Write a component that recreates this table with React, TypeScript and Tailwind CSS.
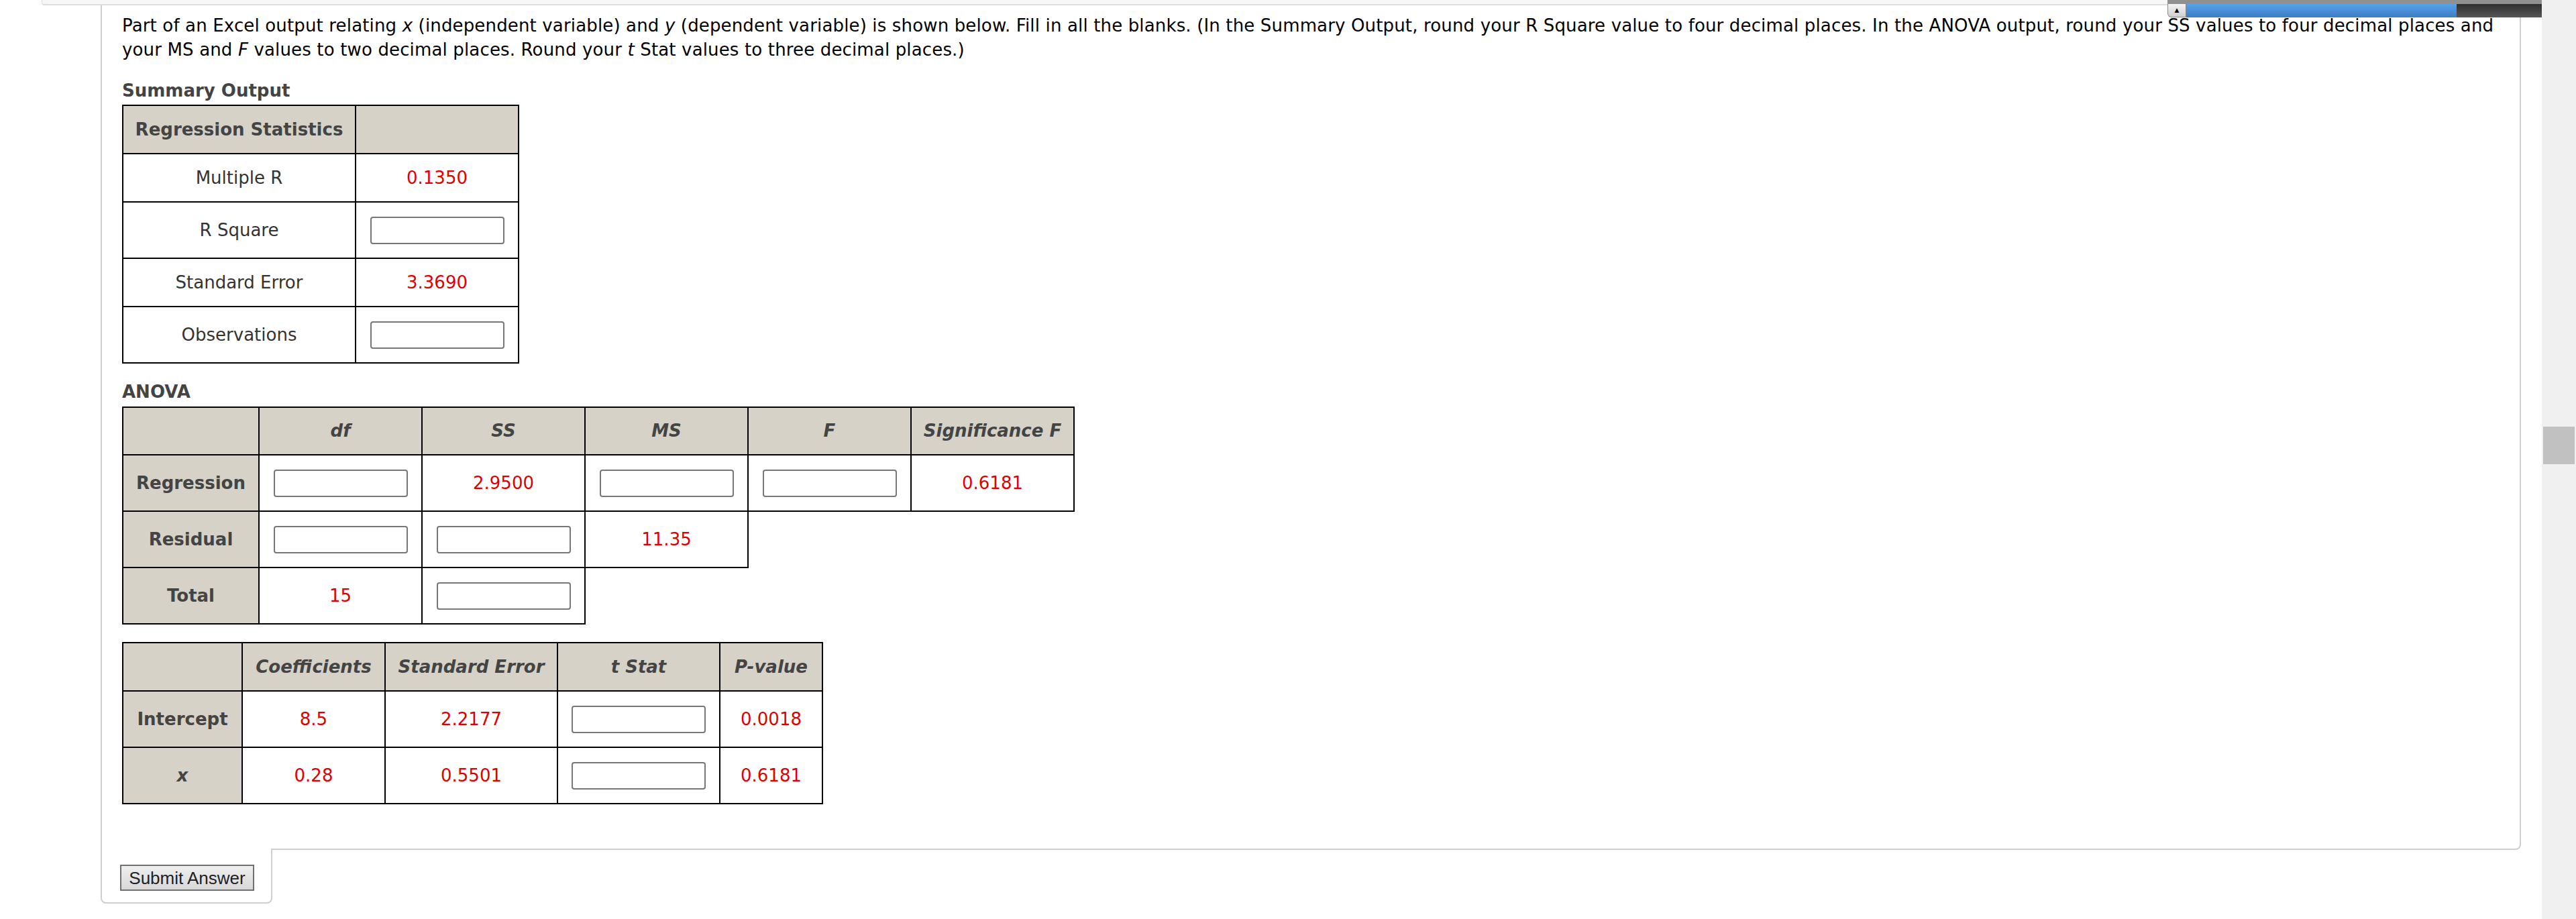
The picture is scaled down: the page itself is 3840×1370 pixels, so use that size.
import React from "react";

const cell = "border-2 border-black p-0 text-center align-middle";
const head = "border-2 border-black bg-[#d6d2c8] p-0 text-center align-middle font-bold text-[#444]";
const red = "text-[#df0000]";

function Field({ label }: { label: string }) {
  return (
    <input
      type="text"
      aria-label={label}
      className="mx-auto block h-[41px] w-[200px] rounded-[4px] border-2 border-[#777] bg-white"
    />
  );
}

function SummaryTable() {
  return (
    <table className="mt-[3px] border-collapse">
      <tbody>
        <tr>
          <th className={`${head} h-[72px] w-[347px]`}>Regression Statistics</th>
          <th className={`${head} w-[243px]`} />
        </tr>
        <tr>
          <td className={`${cell} h-[72px] text-[#333]`}>Multiple R</td>
          <td className={`${cell} ${red}`}>0.1350</td>
        </tr>
        <tr>
          <td className={`${cell} h-[84px] text-[#333]`}>R Square</td>
          <td className={cell}>
            <Field label="R Square" />
          </td>
        </tr>
        <tr>
          <td className={`${cell} h-[72px] text-[#333]`}>Standard Error</td>
          <td className={`${cell} ${red}`}>3.3690</td>
        </tr>
        <tr>
          <td className={`${cell} h-[84px] text-[#333]`}>Observations</td>
          <td className={cell}>
            <Field label="Observations" />
          </td>
        </tr>
      </tbody>
    </table>
  );
}

function AnovaTable() {
  return (
    <table className="mt-[4px] border-collapse">
      <tbody>
        <tr>
          <th className={`${head} h-[71px] w-[203px]`} />
          <th className={`${head} w-[243px] italic`}>df</th>
          <th className={`${head} w-[243px] italic`}>SS</th>
          <th className={`${head} w-[243px] italic`}>MS</th>
          <th className={`${head} w-[243px] italic`}>F</th>
          <th className={`${head} w-[243px] italic`}>Significance F</th>
        </tr>
        <tr>
          <th className={`${head} h-[84px]`}>Regression</th>
          <td className={cell}>
            <Field label="Regression df" />
          </td>
          <td className={`${cell} ${red}`}>2.9500</td>
          <td className={cell}>
            <Field label="Regression MS" />
          </td>
          <td className={cell}>
            <Field label="F" />
          </td>
          <td className={`${cell} ${red}`}>0.6181</td>
        </tr>
        <tr>
          <th className={`${head} h-[84px]`}>Residual</th>
          <td className={cell}>
            <Field label="Residual df" />
          </td>
          <td className={cell}>
            <Field label="Residual SS" />
          </td>
          <td className={`${cell} ${red}`}>11.35</td>
        </tr>
        <tr>
          <th className={`${head} h-[84px]`}>Total</th>
          <td className={`${cell} ${red}`}>15</td>
          <td className={cell}>
            <Field label="Total SS" />
          </td>
        </tr>
      </tbody>
    </table>
  );
}

function CoefficientTable() {
  return (
    <table className="mt-[26px] border-collapse">
      <tbody>
        <tr>
          <th className={`${head} h-[72px] w-[178px]`} />
          <th className={`${head} w-[213px] italic`}>Coefficients</th>
          <th className={`${head} w-[257px] italic`}>Standard Error</th>
          <th className={`${head} w-[242px] italic`}>t Stat</th>
          <th className={`${head} w-[153px] italic`}>P-value</th>
        </tr>
        <tr>
          <th className={`${head} h-[84px]`}>Intercept</th>
          <td className={`${cell} ${red}`}>8.5</td>
          <td className={`${cell} ${red}`}>2.2177</td>
          <td className={cell}>
            <Field label="Intercept t Stat" />
          </td>
          <td className={`${cell} ${red}`}>0.0018</td>
        </tr>
        <tr>
          <th className={`${head} h-[84px] italic`}>x</th>
          <td className={`${cell} ${red}`}>0.28</td>
          <td className={`${cell} ${red}`}>0.5501</td>
          <td className={cell}>
            <Field label="x t Stat" />
          </td>
          <td className={`${cell} ${red}`}>0.6181</td>
        </tr>
      </tbody>
    </table>
  );
}

export default function App() {
  return (
    <div className="relative flex h-[1370px] w-full overflow-hidden bg-white font-['DejaVu_Sans',Verdana,sans-serif] text-[26px]">
      <div className="flex min-w-0 flex-1 flex-col">
        {/* bottom edge of the previous question block */}
        <div className="ml-[62px] h-[8px] rounded-bl-[4px] border-b-2 border-l border-[#dddddd] bg-[#f6f6f6]" />

        <div className="ml-[150px] mr-[31px]">
          <section className="rounded-br-[8px] border-2 border-t-0 border-[#cfcfcf] px-[30px] pb-[66px] pt-[12px]">
            <p className="leading-[36px] tracking-[0.15px] text-black">
              Part of an Excel output relating <i>x</i> (independent variable) and <i>y</i> (dependent variable) is
              shown below. Fill in all the blanks. (In the Summary Output, round your R Square value to four decimal
              places. In the ANOVA output, round your SS values to four decimal places and your MS and <i>F</i>{" "}
              values to two decimal places. Round your <i>t</i> Stat values to three decimal places.)
            </p>

            <h3 className="mt-[25px] font-bold leading-[36px] text-[#444]">Summary Output</h3>
            <SummaryTable />

            <h3 className="mt-[24px] font-bold leading-[36px] text-[#444]">ANOVA</h3>
            <AnovaTable />

            <CoefficientTable />
          </section>

          <div className="relative -mt-[2px] w-[256px] rounded-b-[8px] border-2 border-t-0 border-[#cfcfcf] bg-white pb-[16px] pl-[27px] pt-[24px]">
            <button
              type="button"
              className="h-[39px] w-[200px] border-2 border-[#707070] bg-gradient-to-b from-[#efefef] to-[#d8d8d8] font-['Liberation_Sans',Arial,sans-serif] text-[26px] leading-none text-[#222]"
            >
              Submit Answer
            </button>
          </div>
        </div>
      </div>

      {/* page scrollbar */}
      <div className="w-[51px] shrink-0 bg-[#f0f0f0] pl-[2px] pt-[636px]">
        <div className="h-[56px] w-[47px] bg-[#c1c1c1]" />
      </div>

      {/* collapsed toolbar overlay, top right */}
      <div className="absolute left-[3231px] top-0 w-[558px]">
        <div className="h-[6px] bg-[#909090]" />
        <div className="flex h-[20px]">
          <div className="flex w-[28px] items-center justify-center rounded-bl-[6px] border border-t-0 border-[#8a8a8a] bg-gradient-to-b from-[#f4f4f4] to-[#cfcfcf] text-[9px] leading-none text-black">
            ▲
          </div>
          <div className="w-[403px] bg-gradient-to-b from-[#55a2ee] to-[#3e7dc0]" />
          <div className="flex-1 bg-gradient-to-b from-[#2f2f2f] to-[#575757]" />
        </div>
      </div>
    </div>
  );
}
